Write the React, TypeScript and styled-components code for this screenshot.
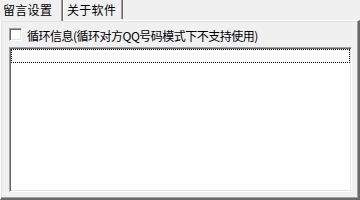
import React from 'react';
import styled, { createGlobalStyle } from 'styled-components';

const GlobalStyle = createGlobalStyle`
  html, body {
    margin: 0;
    padding: 0;
    background: #f0f0f0;
  }
  #root {
    width: 360px;
    height: 200px;
  }
`;

const Window = styled.div`
  width: 360px;
  height: 200px;
  display: flex;
  flex-direction: column;
  background: #f0f0f0;
  font-family: "Noto Sans CJK SC", "DejaVu Sans", sans-serif;
  font-size: 12px;
  color: #000;
  overflow: hidden;
`;

const TabStrip = styled.div`
  display: flex;
  align-items: flex-start;
  height: 20px;
  flex-shrink: 0;
`;

const Tab = styled.div<{ $active?: boolean; $width: number }>`
  position: relative;
  z-index: ${({ $active }) => ($active ? 1 : 0)};
  box-sizing: border-box;
  width: ${({ $width }) => $width}px;
  height: ${({ $active }) => ($active ? '21px' : '19px')};
  padding: 1px 0 0 ${({ $active }) => ($active ? '3px' : '3px')};
  line-height: 18px;
  letter-spacing: 0.3px;
  background: #f0f0f0;
  border-left: ${({ $active }) => ($active ? 'none' : '1px solid #ffffff')};
  border-right: 1px solid #696969;
  box-shadow: inset -1px 0 0 #a0a0a0;
  white-space: nowrap;
`;

const Panel = styled.div`
  flex: 1;
  display: flex;
  flex-direction: column;
  gap: 6px;
  box-sizing: border-box;
  padding: 7px 6px 6px 7px;
  border-top: 1px solid #ffffff;
  border-left: 1px solid #ffffff;
  border-right: 2px solid #696969;
  border-bottom: 2px solid #696969;
  box-shadow: inset -1px -1px 0 #a0a0a0, inset 1px 1px 0 #e3e3e3;
`;

const CheckRow = styled.label`
  display: flex;
  align-items: center;
  gap: 5px;
  height: 13px;
  margin-left: 1px;
`;

const CheckBox = styled.span`
  box-sizing: border-box;
  width: 13px;
  height: 13px;
  flex-shrink: 0;
  background: #ffffff;
  border-top: 1px solid #a0a0a0;
  border-left: 1px solid #a0a0a0;
  border-right: 1px solid #ffffff;
  border-bottom: 1px solid #ffffff;
  box-shadow: inset 1px 1px 0 #696969, inset -1px -1px 0 #e3e3e3;
`;

const CheckLabel = styled.span`
  line-height: 13px;
  padding-top: 1px;
  letter-spacing: -0.5px;
  white-space: nowrap;
`;

const ListBox = styled.div`
  flex: 1;
  box-sizing: border-box;
  margin-left: 1px;
  background: #ffffff;
  border-top: 1px solid #a0a0a0;
  border-left: 1px solid #a0a0a0;
  border-right: 1px solid #ffffff;
  border-bottom: 1px solid #ffffff;
  box-shadow: inset 1px 1px 0 #696969, inset -1px -1px 0 #e3e3e3;
  padding: 1px;
`;

const FocusItem = styled.div`
  box-sizing: border-box;
  height: 14px;
  border: 1px dotted #000000;
`;

export default function App() {
  return (
    <>
      <GlobalStyle />
      <Window>
        <TabStrip>
          <Tab $active $width={63}>留言设置</Tab>
          <Tab $width={60}>关于软件</Tab>
        </TabStrip>
        <Panel>
          <CheckRow>
            <CheckBox />
            <CheckLabel>循环信息(循环对方QQ号码模式下不支持使用)</CheckLabel>
          </CheckRow>
          <ListBox>
            <FocusItem />
          </ListBox>
        </Panel>
      </Window>
    </>
  );
}
